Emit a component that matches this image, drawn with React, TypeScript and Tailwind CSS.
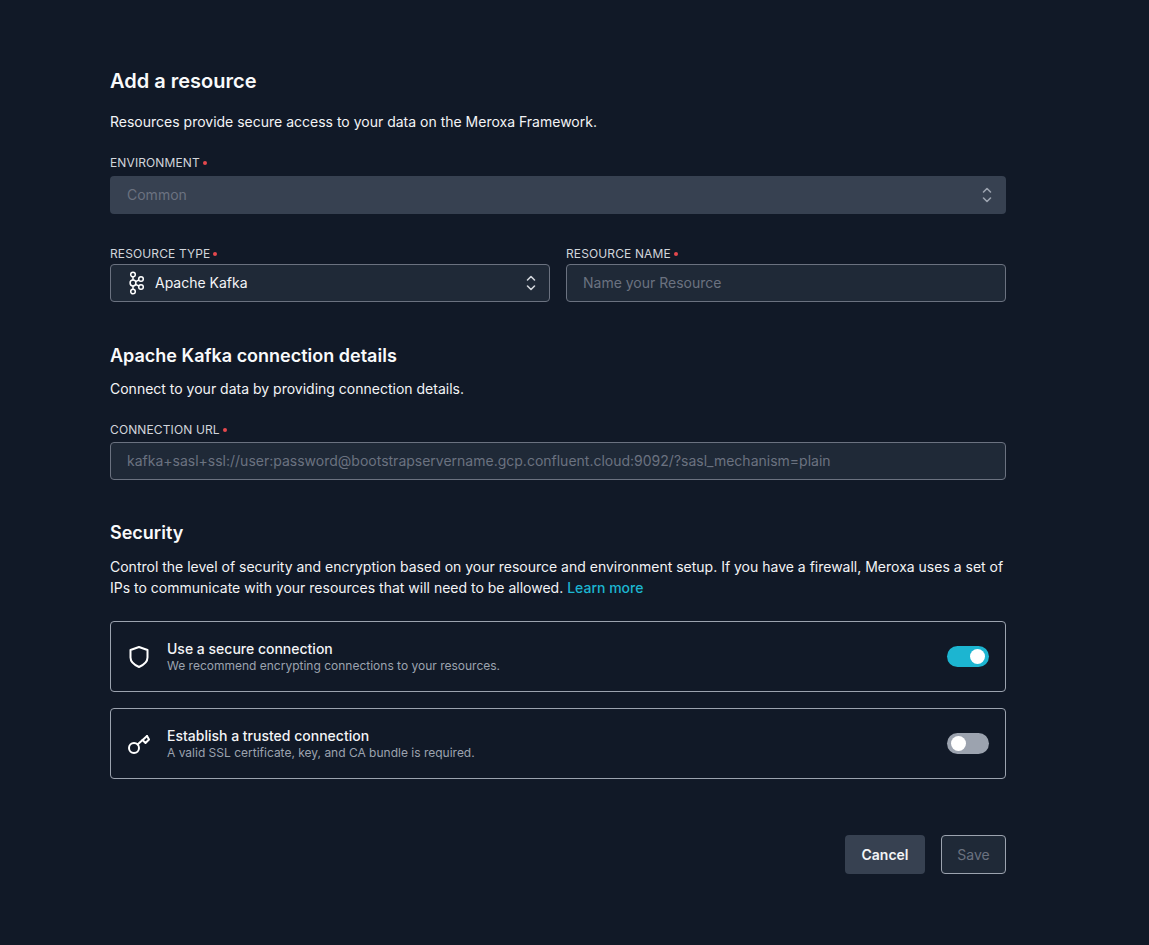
import React from "react";
import { ChevronsUpDown } from "lucide-react";

function Chevrons({ color = "#d1d5db" }: { color?: string }) {
  return (
    <svg width="10" height="16" viewBox="0 0 10 16" fill="none" stroke={color} strokeWidth="1.6" strokeLinecap="round" strokeLinejoin="round">
      <path d="M1.5 5 L5 1.5 L8.5 5" />
      <path d="M1.5 11 L5 14.5 L8.5 11" />
    </svg>
  );
}

function Label({ children }: { children: React.ReactNode }) {
  return (
    <div className="flex h-4 items-center text-xs leading-4 tracking-[0.01em] text-[#d1d5db]">
      <span>{children}</span>
      <span className="ml-[3px] h-1 w-1 rounded-full bg-[#e5484d]" />
    </div>
  );
}

function KafkaIcon() {
  return (
    <svg width="18" height="24" viewBox="0 0 18 24" fill="none" stroke="#ffffff" strokeWidth="1.5">
      <circle cx="6" cy="3.5" r="2.3" />
      <circle cx="6" cy="12" r="2.9" />
      <circle cx="6" cy="20.5" r="2.3" />
      <circle cx="14" cy="8" r="2.3" />
      <circle cx="14" cy="16" r="2.3" />
      <path d="M6 5.8V9M6 15v3.2M8.5 10.6l3.4-1.6M8.5 13.4l3.4 1.6" />
    </svg>
  );
}

function ShieldIcon() {
  return (
    <svg width="20" height="24" viewBox="0 0 20 24" fill="none" stroke="#ffffff" strokeWidth="2" strokeLinejoin="round">
      <path d="M10 2 L18.5 5 V12.5 C18.5 17 14.5 20 10 22 C5.5 20 1.5 17 1.5 12.5 V5 Z" />
    </svg>
  );
}

function KeyIcon() {
  return (
    <svg width="24" height="24" viewBox="0 0 24 24" fill="none" stroke="#ffffff" strokeWidth="2" strokeLinejoin="round" strokeLinecap="round">
      <circle cx="7" cy="16" r="5" />
      <path d="M10.6 12.5 L20 4" />
      <path d="M15.5 8 L18.5 11 L22 7.5 L20 4" />
    </svg>
  );
}

function Toggle({ on }: { on: boolean }) {
  return (
    <div className={`flex h-[21px] w-[42px] items-center rounded-full px-[4px] ${on ? "justify-end bg-[#1cb5d1]" : "justify-start bg-[#9ca3af]"}`}>
      <div className="h-[15px] w-[15px] rounded-full bg-white" />
    </div>
  );
}

function OptionCard({ icon, title, sub, on }: { icon: React.ReactNode; title: string; sub: string; on: boolean }) {
  return (
    <div className="flex h-[71px] items-center rounded border border-[#9ca3af] pl-4 pr-4">
      <div className="flex w-6 justify-center">{icon}</div>
      <div className="ml-4 flex-1">
        <div className="text-sm font-medium leading-[18px] text-[#f3f4f6]">{title}</div>
        <div className="text-xs leading-4 text-[#9ca3af]">{sub}</div>
      </div>
      <Toggle on={on} />
    </div>
  );
}

export default function App() {
  return (
    <div className="min-h-[945px] bg-[#111927] px-[110px] pt-[67px] font-['Inter',sans-serif] text-white">
      <div className="w-[896px]">
        <h1 className="text-xl font-semibold leading-7 text-[#f9fafb]">Add a resource</h1>
        <p className="mt-[17px] text-sm leading-5 text-[#f3f4f6]">Resources provide secure access to your data on the Meroxa Framework.</p>

        <div className="mt-[23px]">
          <Label>ENVIRONMENT</Label>
          <div className="mt-[5px] flex h-[38px] items-center justify-between rounded bg-[#374151] pl-[17px] pr-[14px] text-sm text-[#6b7280]">
            <span>Common</span>
            <Chevrons color="#9ca3af" />
          </div>
        </div>

        <div className="mt-[32px] flex gap-4">
          <div className="flex-1">
            <Label>RESOURCE TYPE</Label>
            <div className="mt-[2px] flex h-[38px] items-center justify-between rounded border border-[#6b7280] bg-[#1f2937] pl-4 pr-[13px] text-sm text-[#f3f4f6]">
              <div className="flex items-center gap-[10px]">
                <KafkaIcon />
                <span>Apache Kafka</span>
              </div>
              <Chevrons />
            </div>
          </div>
          <div className="flex-1">
            <Label>RESOURCE NAME</Label>
            <div className="mt-[2px] flex h-[38px] items-center rounded border border-[#6b7280] bg-[#1f2937] pl-4 text-sm text-[#6b7280]">Name your Resource</div>
          </div>
        </div>

        <h2 className="mt-[40px] text-lg font-semibold leading-7 text-[#f9fafb]">Apache Kafka connection details</h2>
        <p className="mt-[9px] text-sm leading-5 text-[#f3f4f6]">Connect to your data by providing connection details.</p>

        <div className="mt-[23px]">
          <Label>CONNECTION URL</Label>
          <div className="mt-[4px] flex h-[38px] items-center rounded border border-[#6b7280] bg-[#1f2937] pl-4 text-sm text-[#6b7280]">kafka+sasl+ssl://user:password@bootstrapservername.gcp.confluent.cloud:9092/?sasl_mechanism=plain</div>
        </div>

        <h2 className="mt-[39px] text-lg font-semibold leading-7 text-[#f9fafb]">Security</h2>
        <p className="mt-[9px] text-sm leading-[21px] text-[#f3f4f6]">
          Control the level of security and encryption based on your resource and environment setup. If you have a firewall, Meroxa uses a set of IPs to communicate with your resources that will need to be allowed. <span className="font-medium text-[#1cb5d1]">Learn more</span>
        </p>

        <div className="mt-[23px] flex flex-col gap-4">
          <OptionCard icon={<ShieldIcon />} title="Use a secure connection" sub="We recommend encrypting connections to your resources." on />
          <OptionCard icon={<KeyIcon />} title="Establish a trusted connection" sub="A valid SSL certificate, key, and CA bundle is required." on={false} />
        </div>

        <div className="mt-[56px] flex justify-end gap-4">
          <button className="h-[39px] w-[80px] rounded bg-[#374151] text-sm font-semibold text-[#f3f4f6]">Cancel</button>
          <button className="h-[39px] w-[65px] rounded border border-[#9ca3af] bg-[#1f2937] text-sm text-[#6b7280]">Save</button>
        </div>
      </div>
    </div>
  );
}
